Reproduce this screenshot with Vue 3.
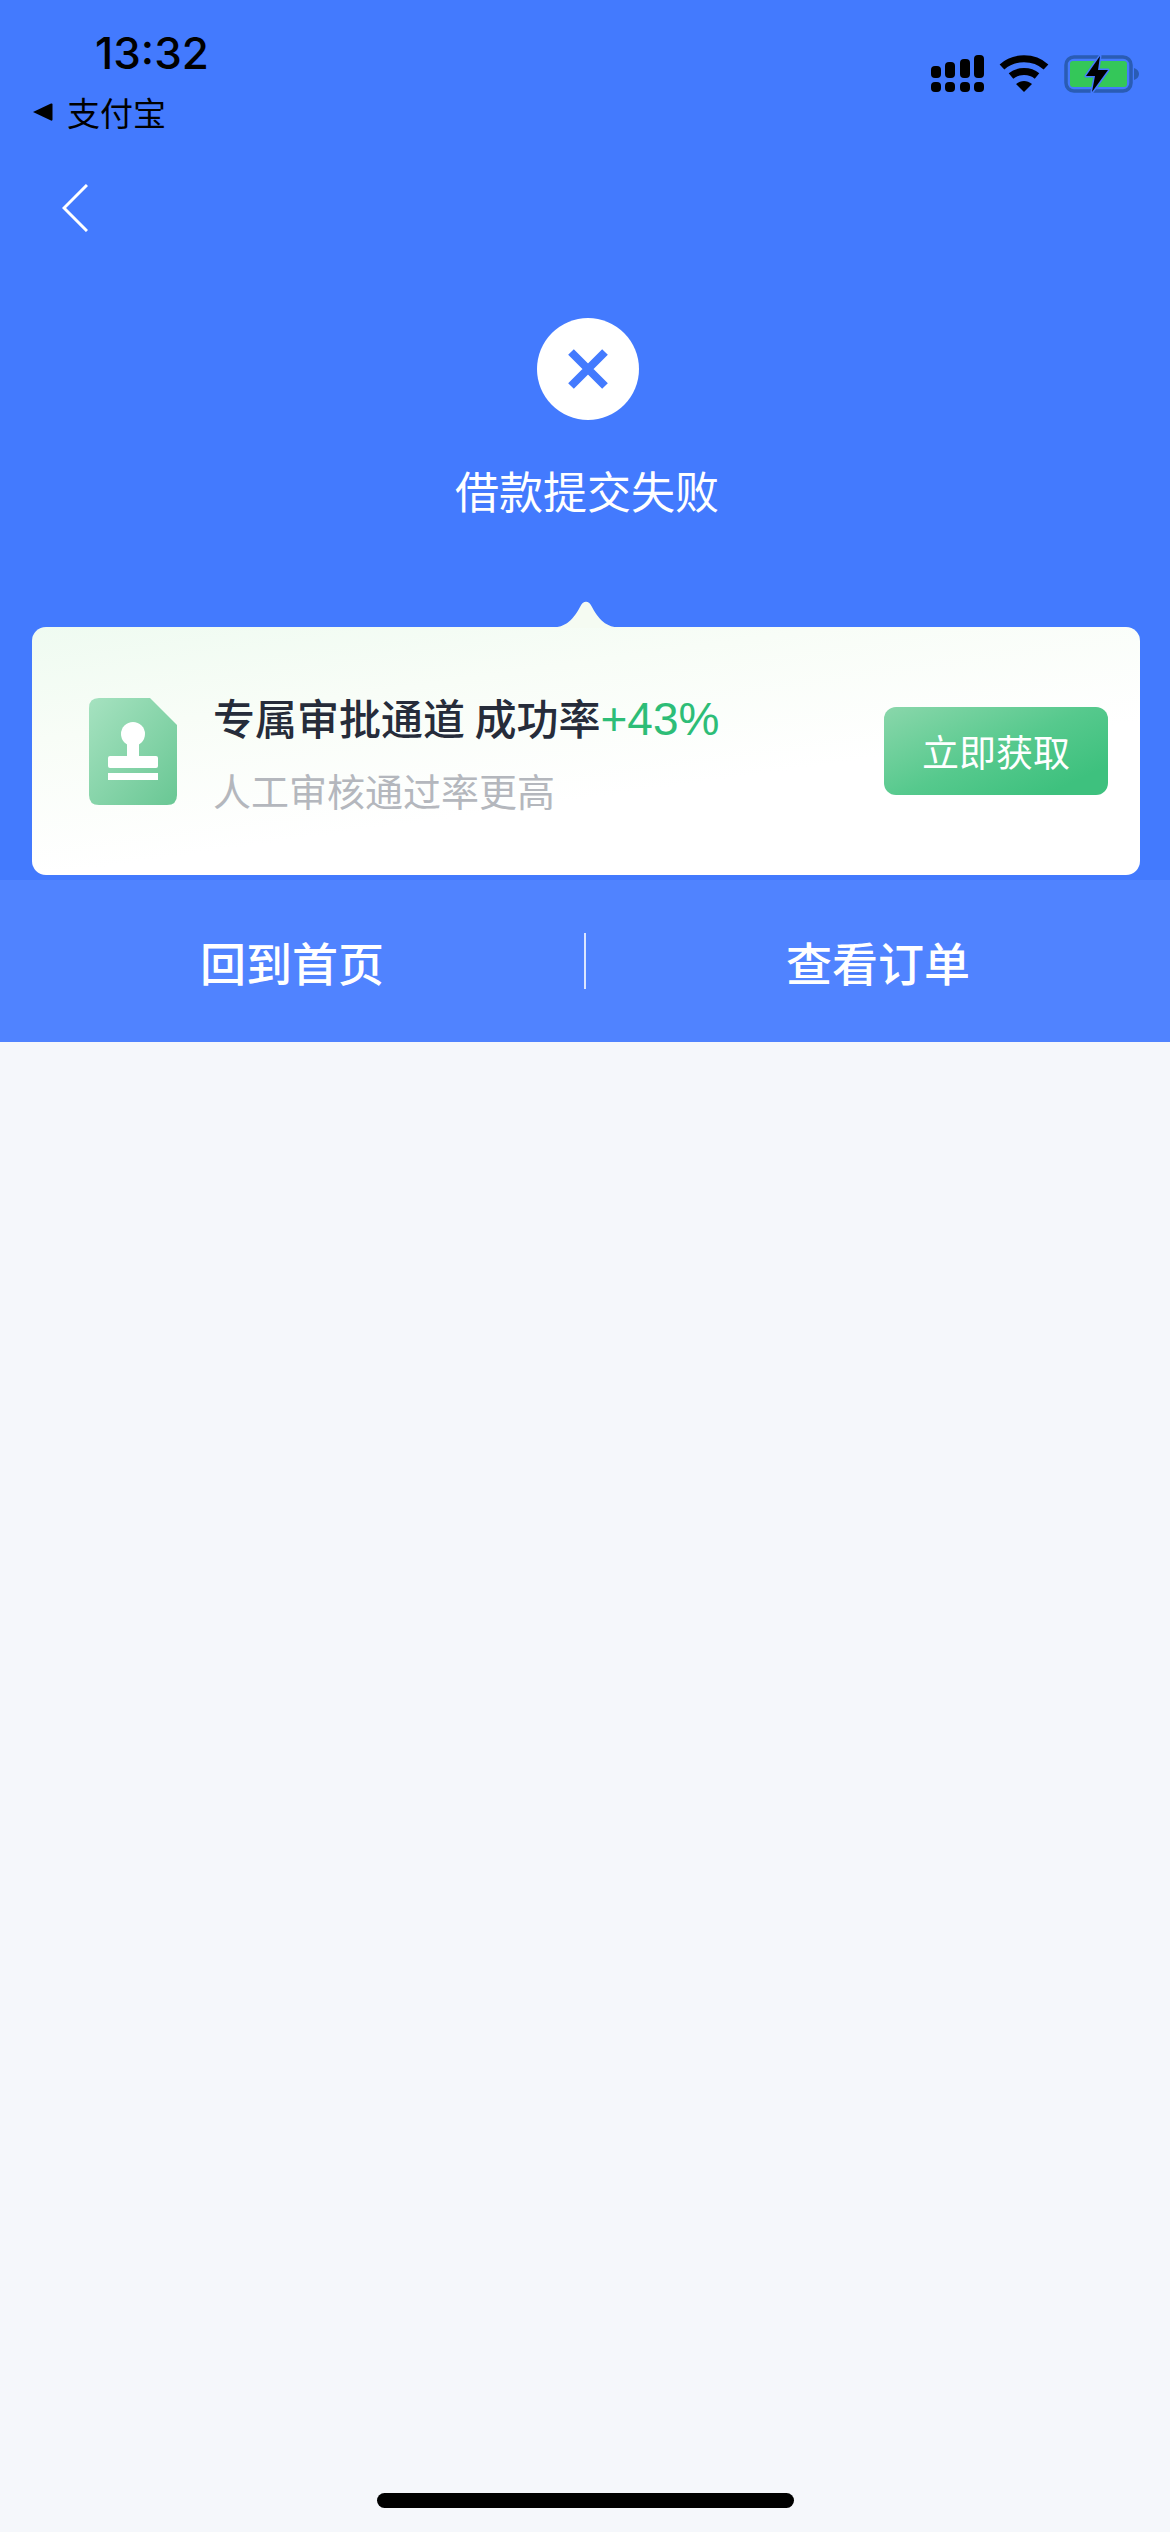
<template>
  <div class="page">
    <section class="hero">
      <div class="status">
        <div class="status-left">
          <div class="time">13:32</div>
          <div class="carrier">
            <svg class="carrier-arrow" width="21" height="20" viewBox="0 0 21 20">
              <path d="M1 10 19 1.5Q20.500 1 20.500 2.500V17.500Q20.500 19 19 18.500Z" fill="#000" />
            </svg>
            <span>支付宝</span>
          </div>
        </div>
        <div class="status-icons">
          <svg width="53" height="38" viewBox="0 0 53 38">
            <g fill="#000">
              <rect x="0" y="11" width="10" height="12" rx="4" />
              <rect x="14" y="7" width="10" height="16" rx="4" />
              <rect x="29" y="4" width="10" height="19" rx="4" />
              <rect x="43" y="0" width="10" height="23" rx="4" />
              <rect x="0" y="27" width="10" height="10" rx="4" />
              <rect x="14" y="27" width="10" height="10" rx="4" />
              <rect x="29" y="27" width="10" height="10" rx="4" />
              <rect x="43" y="27" width="10" height="10" rx="4" />
            </g>
          </svg>
          <svg class="wifi" width="50" height="38" viewBox="0 0 50 38">
            <g fill="none" stroke="#000" stroke-width="7">
              <path d="M3 12C15 1 35 1 47 12" />
              <path d="M12 21C19 15 31 15 38 21" />
            </g>
            <path d="M17 29C22 25 28 25 33 29L25 37Z" fill="#000" />
          </svg>
          <svg class="battery" width="76" height="38" viewBox="0 0 76 38">
            <rect x="2" y="2" width="65" height="34" rx="8" fill="none" stroke="#2a5cb4" stroke-width="3.500" />
            <rect x="6" y="6" width="57" height="26" rx="3" fill="#34c759" />
            <path d="M70 13C73 14 75 16 75 19S73 24 70 25Z" fill="#2a5cb4" />
            <path d="M36 1 22 21H31L28 37 44 15H34Z" fill="#000" stroke="#437afe" stroke-width="3" paint-order="stroke" stroke-linejoin="round" />
          </svg>
        </div>
      </div>

      <button class="back">
        <svg width="26" height="48" viewBox="0 0 26 48">
          <path d="M25 1 2 24 25 47" fill="none" stroke="#fff" stroke-width="3" />
        </svg>
      </button>

      <div class="result-icon">
        <svg width="40" height="40" viewBox="0 0 40 40">
          <path d="M3 3 37 37M37 3 3 37" stroke="#437afe" stroke-width="8" />
        </svg>
      </div>
      <div class="result-title">借款提交失败</div>

      <div class="card">
        <svg class="notch" width="76" height="28" viewBox="0 0 76 28">
          <path d="M0 28C16 28 24 22 32 7C35 0 41 0 44 7C52 22 60 28 76 28Z" fill="#f5fbf2" />
        </svg>
        <svg class="stamp" width="88" height="107" viewBox="0 0 88 107">
          <defs>
            <linearGradient id="stampBg" x1="0" y1="0" x2="1" y2="1">
              <stop offset="0" stop-color="#a6e2c0" />
              <stop offset="1" stop-color="#69c794" />
            </linearGradient>
          </defs>
          <path d="M10 0H61L88 27V97Q88 107 78 107H10Q0 107 0 97V10Q0 0 10 0Z" fill="url(#stampBg)" />
          <circle cx="44" cy="36" r="12" fill="#fff" />
          <rect x="38" y="40" width="12" height="20" fill="#fff" />
          <rect x="19" y="58" width="50" height="12" rx="2" fill="#fff" />
          <rect x="19" y="75" width="50" height="7" fill="#fff" />
        </svg>
        <div class="card-text">
          <div class="card-title">专属审批通道 成功率<span class="rate">+43%</span></div>
          <div class="card-sub">人工审核通过率更高</div>
        </div>
        <button class="get-btn">立即获取</button>
      </div>
    </section>

    <div class="actions">
      <div class="action">回到首页</div>
      <div class="divider"></div>
      <div class="action">查看订单</div>
    </div>

    <div class="home-bar"></div>
  </div>
</template>

<script setup>
</script>

<style scoped>
.page {
  width: 1170px;
  height: 2532px;
  display: flex;
  flex-direction: column;
  background: #f5f7fb;
  font-family: "Noto Sans CJK SC", "Liberation Sans", sans-serif;
  overflow: hidden;
}

.hero {
  height: 880px;
  box-sizing: border-box;
  display: flex;
  flex-direction: column;
  padding: 26px 30px 5px 32px;
  background: #437afe;
}

.status {
  display: flex;
  justify-content: space-between;
}

.time {
  margin-left: 63px;
  font-family: Inter, "Liberation Sans", sans-serif;
  font-size: 44px;
  font-weight: 500;
  line-height: 54px;
  color: #000;
}

.carrier {
  display: flex;
  align-items: center;
  gap: 14px;
  margin-top: 12px;
  font-size: 33px;
  line-height: 40px;
  color: #000;
}

.status-icons {
  display: flex;
  align-items: flex-start;
  gap: 15px;
  padding-top: 29px;
}

.back {
  align-self: flex-start;
  margin: 52px 0 0 30px;
  padding: 0;
  height: 48px;
  border: 0;
  background: none;
}

.back svg {
  display: block;
}

.result-icon {
  align-self: center;
  display: flex;
  align-items: center;
  justify-content: center;
  width: 102px;
  height: 102px;
  margin-top: 86px;
  margin-left: 4px;
  border-radius: 50%;
  background: #fff;
}

.result-title {
  align-self: center;
  margin-top: 40px;
  margin-left: 2px;
  font-size: 44px;
  line-height: 60px;
  color: #fff;
}

.card {
  position: relative;
  display: flex;
  align-items: center;
  height: 248px;
  box-sizing: border-box;
  margin-top: 107px;
  padding: 0 32px 0 57px;
  border-radius: 14px;
  background: linear-gradient(172deg, #effbf1 0%, #f8fdf7 28%, #fff 62%);
}

.notch {
  position: absolute;
  top: -27px;
  left: 516px;
}

.card-text {
  margin-left: 36px;
}

.card-title {
  font-size: 42px;
  font-weight: 500;
  line-height: 60px;
  color: #262c3a;
}

.rate {
  font-family: "Liberation Sans", sans-serif;
  font-size: 46px;
  font-weight: 400;
  color: #2dbd77;
}

.card-sub {
  margin-top: 16px;
  font-size: 38px;
  line-height: 50px;
  color: #b4b7bd;
}

.get-btn {
  margin-left: auto;
  width: 224px;
  height: 88px;
  padding: 0;
  border: 0;
  border-radius: 12px;
  font-family: inherit;
  font-size: 37px;
  color: #fff;
  background: linear-gradient(155deg, #8ad7ab 0%, #56c98d 50%, #3ec17e 85%);
}

.actions {
  display: flex;
  align-items: center;
  height: 162px;
  background: #5083ff;
}

.action {
  flex: 1;
  text-align: center;
  font-size: 46px;
  font-weight: 500;
  color: #fff;
}

.divider {
  width: 2px;
  height: 56px;
  background: #dbe5ff;
}

.home-bar {
  align-self: center;
  width: 417px;
  height: 15px;
  margin-top: auto;
  margin-bottom: 24px;
  border-radius: 8px;
  background: #000;
}
</style>
